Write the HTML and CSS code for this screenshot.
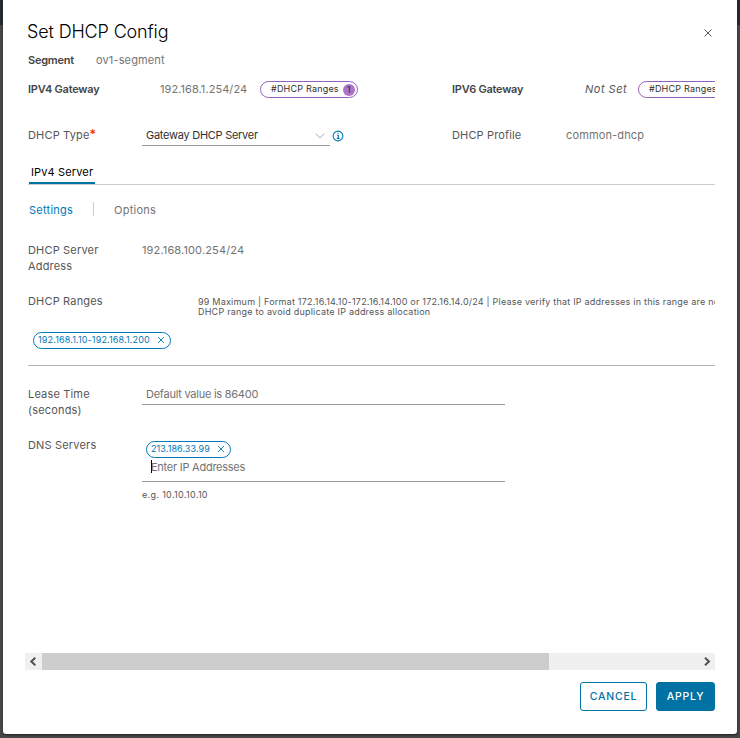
FILE: index.html
```html
<!DOCTYPE html>
<html lang="en">
<head>
<meta charset="utf-8">
<title>Set DHCP Config</title>
<link rel="stylesheet" href="styles.css">
</head>
<body>
<div class="modal">
  <header class="header">
    <h1 class="title">Set DHCP Config</h1>
    <svg class="close" viewBox="0 0 8 8"><path d="M.5.5l7 7M7.5.5l-7 7"/></svg>
  </header>
  <main class="content">
    <div class="row segment"><b class="seg-label">Segment</b><span class="muted seg-name">ov1-segment</span></div>
    <div class="row gateways">
      <b class="gw-label">IPV4 Gateway</b><span class="gw-value muted">192.168.1.254/24</span>
      <span class="badge"><span class="badge-text">#DHCP Ranges</span><span class="count">1</span></span>
      <b class="gw-label gw6">IPV6 Gateway</b><i class="unset">Not Set</i>
      <span class="badge second"><span class="badge-text">#DHCP Ranges</span></span>
    </div>
    <div class="row type">
      <label class="label">DHCP Type<span class="required">*</span></label>
      <div class="select"><span class="server">Gateway DHCP Server</span><svg class="chevron" viewBox="0 0 10 6"><path d="M.7.6L5 5 9.3.6"/></svg></div>
      <svg class="info" viewBox="0 0 12 12"><circle cx="6" cy="6" r="4.9"/><path d="M5 5.3h1.3v3M4.7 8.4h3"/><path d="M5.4 3.2h1.2"/></svg>
      <span class="profile-label">DHCP Profile</span><span class="muted profile">common-dhcp</span>
    </div>
    <nav class="tabs"><span class="tab">IPv4 Server</span></nav>
    <nav class="subtabs"><span class="settings">Settings</span><span class="divider"></span><span class="options muted">Options</span></nav>
    <div class="row address"><span class="label">DHCP Server<br>Address</span><span class="muted address-value">192.168.100.254/24</span></div>
    <div class="row ranges"><span class="label">DHCP Ranges</span>
      <p class="hint">99 Maximum | Format 172.16.14.10-172.16.14.100 or 172.16.14.0/24 | Please verify that IP addresses in this range are not<br>DHCP range to avoid duplicate IP address allocation</p>
    </div>
    <div class="range-list"><span class="chip range-chip"><span class="range-text">192.168.1.10-192.168.1.200</span><svg class="remove" viewBox="0 0 8 8"><path d="M1 1l6 6M7 1L1 7"/></svg></span></div>
    <div class="row lease"><span class="label">Lease Time<br>(seconds)</span><div class="field lease-field"><span class="lease-text">Default value is 86400</span></div></div>
    <div class="row dns"><span class="label">DNS Servers</span>
      <div class="dns-column"><div class="field dns-field"><span class="chip dns-chip"><span class="dns-text">213.186.33.99</span><svg class="remove" viewBox="0 0 8 8"><path d="M1 1l6 6M7 1L1 7"/></svg></span><div class="entry"><span class="entry-text">Enter IP Addresses</span></div></div><span class="example">e.g. 10.10.10.10</span></div>
    </div>
  </main>
  <div class="scrollbar">
    <svg class="arrow" viewBox="0 0 17 17"><path d="M10.3 4.7L6.3 8.5l4 3.8"/></svg><span class="thumb"></span>
    <svg class="arrow" viewBox="0 0 17 17"><path d="M7 4.7l4 3.8-4 3.8"/></svg>
  </div>
  <footer class="footer"><button class="button cancel"><span>CANCEL</span></button><button class="button apply"><span>APPLY</span></button></footer>
</div>
</body>
</html>
```

FILE: styles.css
```css
* { box-sizing: border-box; }
body { margin: 0; height: 738px; padding: 0 3px 4px; overflow: hidden; background: linear-gradient(#242b31 25px, #474747 25px); font: 11px/16px Inter, "Liberation Sans", sans-serif; letter-spacing: .14px; color: #565656; white-space: nowrap; }
.modal { height: 734px; background: #fff; border-radius: 0 0 3px 3px; box-shadow: 0 1px 2px #222; padding: 16px 22px 0; display: flex; flex-direction: column; }
.header { height: 36px; padding-left: 2px; display: flex; justify-content: space-between; }
.title { margin: 0; font-size: 18px; line-height: 32px; font-weight: 300; letter-spacing: -.15px; color: #000; }
.close { width: 8px; height: 8px; margin: 13px 3px 0 0; fill: none; stroke: #565656; }
.content { height: 601px; padding-left: 3px; overflow: hidden; }
.row { display: flex; }
.muted { color: #737373; }
b { color: #454545; font-weight: 600; letter-spacing: -.25px; }
.segment { height: 29px; }
.seg-label { width: 68px; }
.gateways { height: 46px; }
.gw-label { width: 132px; flex: none; }
.gw-value { width: 100px; flex: none; letter-spacing: .07px; }
.badge { flex: none; width: 98px; height: 17px; border: 1px solid #9460b8; border-radius: 9px; padding: 0 2px 0 10px; display: flex; align-items: center; justify-content: space-between; font-size: 9px; letter-spacing: .2px; color: #313131; }
.badge-text { line-height: 14px; padding-bottom: 1px; }
.count { width: 12px; height: 12px; border-radius: 50%; background: #ad73c8; line-height: 12px; text-align: center; }
.gw6 { margin-left: 94px; width: 133px; }
.unset { width: 53px; flex: none; letter-spacing: .5px; }
.type { height: 37px; }
.label { width: 114px; flex: none; letter-spacing: .17px; }
.required { color: #e12200; font-size: 13px; line-height: 12px; }
.select { width: 188px; height: 19px; border-bottom: 1px solid #999; padding: 0 5px 0 4px; display: flex; justify-content: space-between; color: #313131; }
.server { letter-spacing: -.27px; }
.chevron { width: 10px; height: 6px; margin-top: 6px; fill: none; stroke: #aaa; }
.info { width: 12px; height: 12px; margin: 3px 108px 0 2px; fill: none; stroke: #0079b8; stroke-width: 1.1; }
.profile-label { width: 114px; }
.tabs { height: 21px; border-bottom: 1px solid #ccc; }
.tab { display: block; width: 66px; height: 20px; margin-left: 1px; padding-left: 2px; border-bottom: 2px solid #0072a3; color: #000; }
.subtabs { height: 57px; padding: 17px 0 0 1px; display: flex; letter-spacing: .25px; }
.settings { width: 64px; color: #0079b8; }
.divider { width: 1px; height: 14px; background: #ccc; margin-right: 20px; }
.address { height: 51px; }
.ranges { height: 39px; }
.hint { margin: 4px 0 0 56px; font-size: 9px; line-height: 10px; letter-spacing: .22px; }
.range-list { height: 34px; padding-left: 5px; border-bottom: 1px solid #b3b3b3; }
.chip { display: inline-flex; height: 17px; border: 1px solid #0079b8; border-radius: 9px; padding: 0 5px 0 4px; justify-content: space-between; color: #0079b8; font-size: 9px; line-height: 13px; vertical-align: top; }
.range-chip { width: 138px; }
.dns-chip { width: 85px; }
.remove { width: 8px; height: 8px; margin-top: 3px; fill: none; stroke: #0079b8; stroke-width: .9; }
.lease { height: 71px; padding-top: 20px; }
.field { width: 363px; border-bottom: 1px solid #999; color: #737373; letter-spacing: -.25px; }
.range-text { letter-spacing: .15px; }
.dns-text { letter-spacing: .08px; }
.lease-field { height: 19px; padding-left: 4px; }
.dns-field { height: 41px; padding: 0 0 0 4px; margin-top: 4px; margin-bottom: 4px; }
.entry { margin: 1px 0 0 5px; height: 16px; }
.entry-text { display: block; }
.entry::before { content: ""; float: left; width: 1px; height: 13px; margin-top: 1px; margin-right: -1px; background: #000; }
.example { font-size: 9px; letter-spacing: .33px; }
.scrollbar { height: 17px; background: #f0f0f0; display: flex; }
.arrow { width: 17px; height: 17px; fill: none; stroke: #505050; stroke-width: 2; }
.thumb { width: 507px; background: #cdcdcd; margin-right: auto; }
.footer { display: flex; justify-content: flex-end; gap: 9px; padding-top: 12px; }
.button { height: 29px; border: 1px solid #0072a3; border-radius: 3px; padding: 1px 0 0; font: 500 10.5px/26px Inter, sans-serif; letter-spacing: .8px; color: #0072a3; background: #fff; }
.cancel { width: 67px; }
.apply { width: 59px; color: #fff; background: #0072a3; }
```
